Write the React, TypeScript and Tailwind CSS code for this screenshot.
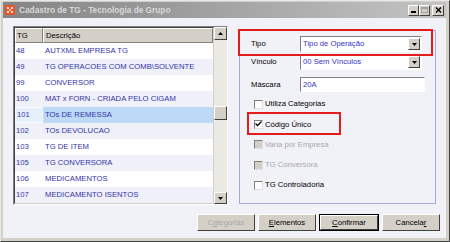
import React from "react";

const ROWS: [string, string][] = [
  ["48", "AUTXML EMPRESA TG"],
  ["49", "TG OPERACOES COM COMB\\SOLVENTE"],
  ["99", "CONVERSOR"],
  ["100", "MAT x FORN - CRIADA PELO CIGAM"],
  ["101", "TOs DE REMESSA"],
  ["102", "TOs DEVOLUCAO"],
  ["103", "TG DE ITEM"],
  ["105", "TG CONVERSORA"],
  ["106", "MEDICAMENTOS"],
  ["107", "MEDICAMENTO ISENTOS"],
];

const SELECTED = "101";

function Arrow({ up }: { up?: boolean }) {
  return (
    <svg width="5" height="3" viewBox="0 0 5 3" className={up ? "rotate-180" : ""}>
      <path d="M0 0h5L2.5 3z" fill="#000" />
    </svg>
  );
}

function ClassicBtn({ children, className = "" }: { children?: React.ReactNode; className?: string }) {
  return (
    <div
      className={`flex items-center justify-center bg-[#d4d0c8] border border-t-white border-l-white border-r-[#404040] border-b-[#404040] ${className}`}
    >
      {children}
    </div>
  );
}

function TitleBar() {
  return (
    <div className="flex h-[16px] items-center bg-gradient-to-r from-[#848484] to-[#c4c4c4] pl-[2px] pr-[2px]">
      <div className="flex h-[10px] w-[10px] items-center justify-center bg-[#e8552a]">
        <svg width="8" height="8" viewBox="0 0 8 8">
          <path d="M1 1h2v2H1zM5 1h2v2H5zM3 3h2v2H3zM1 5h2v2H1zM5 5h2v2H5z" fill="#ffd9c0" />
        </svg>
      </div>
      <span className="ml-[4px] text-[8.3px] font-bold leading-none text-[#d8d8d8]">
        Cadastro de TG - Tecnologia de Grupo
      </span>
      <div className="ml-auto flex items-center">
        <ClassicBtn className="h-[11px] w-[11px] items-end pb-[2px]">
          <div className="h-[2px] w-[5px] bg-black" />
        </ClassicBtn>
        <ClassicBtn className="h-[11px] w-[11px]">
          <div className="h-[6px] w-[7px] border border-t-2 border-[#a0a0a0]" />
        </ClassicBtn>
        <ClassicBtn className="ml-[2px] h-[11px] w-[12px]">
          <svg width="7" height="6" viewBox="0 0 7 6">
            <path d="M1 0.5l5 5M6 0.5l-5 5" stroke="#000" strokeWidth="1.4" />
          </svg>
        </ClassicBtn>
      </div>
    </div>
  );
}

function Grid() {
  return (
    <div className="flex h-[179px] w-[215px] border border-t-[#808080] border-l-[#808080] border-r-white border-b-white">
      <div className="flex flex-1 flex-col bg-white border border-t-[#404040] border-l-[#404040] border-r-[#d4d0c8] border-b-[#d4d0c8]">
        <div className="flex h-[15px] text-black">
          <div className="flex w-[28px] items-center bg-[#d4d0c8] pl-[1px] border border-t-white border-l-white border-r-[#808080] border-b-[#808080]">
            TG
          </div>
          <div className="flex flex-1 items-center bg-[#d4d0c8] pl-[2px] border border-t-white border-l-white border-r-[#808080] border-b-[#808080]">
            Descrição
          </div>
        </div>
        {ROWS.map(([tg, desc], i) => {
          const sel = tg === SELECTED;
          const bg = sel ? "bg-[#bcdaf6]" : i % 2 === 0 ? "bg-white" : "bg-[#f0f0f8]";
          return (
            <div key={tg} className={`flex h-[16px] items-center text-[#3434ac] ${bg}`}>
              <div
                className={`flex h-full w-[28px] items-center pl-[1px] ${
                  sel ? "bg-[#e6f0fb] border border-[#f8fbff]" : ""
                }`}
              >
                {tg}
              </div>
              <div className="pl-[2px] whitespace-nowrap">{desc}</div>
            </div>
          );
        })}
      </div>
      <div className="flex w-[13px] flex-col bg-[#ebe9e4]">
        <ClassicBtn className="h-[13px] w-[13px]">
          <Arrow up />
        </ClassicBtn>
        <div className="h-[66px]" />
        <ClassicBtn className="h-[14px] w-[13px]" />
        <div className="flex-1" />
        <ClassicBtn className="h-[12px] w-[13px]">
          <Arrow />
        </ClassicBtn>
      </div>
    </div>
  );
}

function Select({ value }: { value: string }) {
  return (
    <div className="flex h-[16px] w-[122px] items-center bg-white border border-t-[#808080] border-l-[#808080] border-r-white border-b-white">
      <span className="flex-1 pl-[2px] text-[#3434c4]">{value}</span>
      <ClassicBtn className="h-[12px] w-[12px] mr-[1px]">
        <Arrow />
      </ClassicBtn>
    </div>
  );
}

function Check({ label, checked, disabled }: { label: string; checked?: boolean; disabled?: boolean }) {
  return (
    <div className="flex h-[20.3px] items-center pl-[14px]">
      <div
        className={`flex h-[9px] w-[9px] items-center justify-center border border-t-[#808080] border-l-[#808080] border-r-[#e0e0e0] border-b-[#e0e0e0] ${
          disabled ? "bg-[#d4d0c8]" : "bg-white"
        }`}
      >
        {checked && (
          <svg width="7" height="6" viewBox="0 0 7 6">
            <path d="M0.5 2.5l2 2 4-4" stroke="#000" strokeWidth="1.3" fill="none" />
          </svg>
        )}
      </div>
      <span className={`ml-[2px] ${disabled ? "text-[#a8a8a8]" : "text-black"}`}>{label}</span>
    </div>
  );
}

function Panel() {
  return (
    <div className="relative mt-[4px] ml-[11px] h-[174px] w-[197px] border border-[#a8a8de] pt-[5px]">
      <div className="flex items-center pl-[11px]">
        <span className="w-[49px]">Tipo</span>
        <Select value="Tipo de Operação" />
      </div>
      <div className="mt-[2px] flex items-center pl-[11px]">
        <span className="w-[49px]">Vínculo</span>
        <Select value="00 Sem Vínculos" />
      </div>
      <div className="mt-[7px] flex items-center pl-[11px]">
        <span className="w-[49px]">Máscara</span>
        <div className="flex h-[15px] w-[125px] items-center bg-white pl-[2px] text-[#3434c4] border border-t-[#808080] border-l-[#808080] border-r-white border-b-white">
          20A
        </div>
      </div>
      <div className="mt-[2px]">
        <Check label="Utiliza Categorias" />
        <Check label="Código Único" checked />
        <Check label="Varia por Empresa" disabled />
        <Check label="TG Conversora" disabled />
        <Check label="TG Controladoria" />
      </div>
      <div className="pointer-events-none absolute left-[-2px] top-[-2px] h-[27px] w-[195px] border-2 border-[#e41c1c]" />
      <div className="pointer-events-none absolute left-[7px] top-[81px] h-[23px] w-[94px] border-2 border-[#e41c1c]" />
    </div>
  );
}

function Button({
  label,
  u,
  disabled,
  def,
}: {
  label: string;
  u: number;
  disabled?: boolean;
  def?: boolean;
}) {
  const text = (
    <span className={disabled ? "text-[#a8a8a8]" : "text-black"}>
      {label.slice(0, u)}
      <span className="underline">{label[u]}</span>
      {label.slice(u + 1)}
    </span>
  );
  return (
    <div className={`h-[17px] ${def ? "border border-black" : ""}`}>
      <ClassicBtn className={`h-full ${def ? "w-[58px]" : "w-[58px]"}`}>{text}</ClassicBtn>
    </div>
  );
}

export default function App() {
  return (
    <div className="h-[242px] w-[450px] overflow-hidden font-['Liberation_Sans',Arial,sans-serif] text-[7.7px] leading-none">
      <div className="flex h-full flex-col bg-[#d4d0c8] pl-[2px] pr-[3px] pt-[1px] pb-[3px] border border-t-[#e8e8e8] border-l-[#e8e8e8] border-r-[#404040] border-b-[#404040]">
        <TitleBar />
        <div className="flex flex-1 flex-col bg-[#f1f1f8] pl-[10px] pt-[8px]">
          <div className="flex">
            <Grid />
            <Panel />
          </div>
          <div className="mt-[9px] flex justify-end gap-[3px] pr-[6px]">
            <Button label="Categorias" u={1} disabled />
            <Button label="Elementos" u={0} />
            <Button label="Confirmar" u={0} def />
            <Button label="Cancelar" u={7} />
          </div>
        </div>
      </div>
    </div>
  );
}
